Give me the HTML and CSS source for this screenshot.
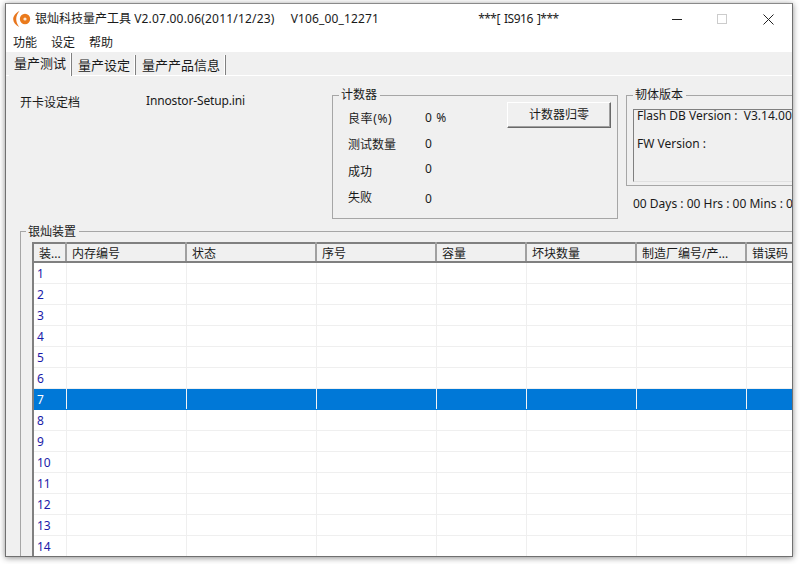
FILE: index.html
```html
<!DOCTYPE html>
<html lang="zh-CN">
<head>
<meta charset="utf-8">
<title>银灿科技量产工具</title>
<link rel="stylesheet" href="styles.css">
</head>
<body>
<div class="window">
  <header class="titlebar">
    <svg class="logo" viewBox="0 0 18 18" width="18" height="18"><path d="M6.4 1C2.6 3.2 0 6.2.2 9.5c.2 3.2 2.6 5.8 6 7.5C4.2 14 3.2 11.6 3.2 9.2 3.2 6.4 4.4 3.6 6.4 1z" fill="#e8761e"/><circle cx="12" cy="9" r="5.2" fill="#ea7a1c"/><circle cx="12" cy="9" r="1.6" fill="#fde6d2"/></svg>
    <span class="title-main">银灿科技量产工具 <span class="latin">V2.07.00.06(2011/12/23)</span></span>
    <span class="title-build latin">V106_00_12271</span>
    <span class="title-ic">***[ IS916 ]***</span>
    <div class="controls">
      <svg width="10" height="10" viewBox="0 0 10 10" class="ctl-min"><path d="M0 5.5h10" stroke="#222" stroke-width="1"/></svg>
      <svg width="10" height="10" viewBox="0 0 10 10" class="ctl-max"><rect x=".5" y=".5" width="9" height="9" fill="none" stroke="#ccc"/></svg>
      <svg width="11" height="11" viewBox="0 0 11 11" class="ctl-close"><path d="M.5.5l10 10M10.5.5l-10 10" stroke="#222" stroke-width="1"/></svg>
    </div>
  </header>
  <nav class="menubar"><span>功能</span><span>设定</span><span>帮助</span></nav>
  <div class="tabs">
    <span class="tab active">量产测试</span>
    <span class="tab">量产设定</span>
    <span class="tab">量产产品信息</span>
  </div>
  <main class="panel">
    <section class="top">
      <div class="setup">
        <span class="setup-label">开卡设定档</span>
        <span class="setup-value">Innostor-Setup.ini</span>
      </div>
      <fieldset class="group counter">
        <legend>计数器</legend>
        <div class="stats">
          <span class="s-l wide">良率(%)</span><span class="s-v wide">0 %</span>
          <span class="s-l">测试数量</span><span class="s-v">0</span>
          <span class="s-l">成功</span><span class="s-v up">0</span>
          <span class="s-l">失败</span><span class="s-v down">0</span>
        </div>
        <button class="reset">计数器归零</button>
      </fieldset>
      <div class="fw-col">
        <fieldset class="group firmware">
          <legend>韧体版本</legend>
          <div class="fw-box">
            <div class="fw-line">Flash DB Version :&nbsp; V3.14.00</div>
            <div class="fw-line second">FW Version :</div>
          </div>
        </fieldset>
        <div class="timer">00 Days : 00 Hrs : 00 Mins : 00 Secs</div>
      </div>
    </section>
    <fieldset class="group devices">
      <legend>银灿装置</legend>
      <table class="grid">
        <colgroup><col class="c0"><col class="c1"><col class="c2"><col class="c3"><col class="c4"><col class="c5"><col class="c6"><col class="c7"></colgroup>
        <thead><tr><th>装...</th><th>内存编号</th><th>状态</th><th>序号</th><th>容量</th><th>坏块数量</th><th>制造厂编号/产...</th><th>错误码</th></tr></thead>
        <tbody>
          <tr><td>1</td><td></td><td></td><td></td><td></td><td></td><td></td><td></td></tr>
          <tr><td>2</td><td></td><td></td><td></td><td></td><td></td><td></td><td></td></tr>
          <tr><td>3</td><td></td><td></td><td></td><td></td><td></td><td></td><td></td></tr>
          <tr><td>4</td><td></td><td></td><td></td><td></td><td></td><td></td><td></td></tr>
          <tr><td>5</td><td></td><td></td><td></td><td></td><td></td><td></td><td></td></tr>
          <tr><td>6</td><td></td><td></td><td></td><td></td><td></td><td></td><td></td></tr>
          <tr class="sel"><td>7</td><td></td><td></td><td></td><td></td><td></td><td></td><td></td></tr>
          <tr><td>8</td><td></td><td></td><td></td><td></td><td></td><td></td><td></td></tr>
          <tr><td>9</td><td></td><td></td><td></td><td></td><td></td><td></td><td></td></tr>
          <tr><td>10</td><td></td><td></td><td></td><td></td><td></td><td></td><td></td></tr>
          <tr><td>11</td><td></td><td></td><td></td><td></td><td></td><td></td><td></td></tr>
          <tr><td>12</td><td></td><td></td><td></td><td></td><td></td><td></td><td></td></tr>
          <tr><td>13</td><td></td><td></td><td></td><td></td><td></td><td></td><td></td></tr>
          <tr><td>14</td><td></td><td></td><td></td><td></td><td></td><td></td><td></td></tr>
        </tbody>
      </table>
    </fieldset>
  </main>
</div>
</body>
</html>
```
FILE: styles.css
```css
* { box-sizing: border-box; }
html, body { margin: 0; height: 100%; background: #fff; overflow: hidden; }
body { padding: 3px 7px 7px 5px; font: 12px/16px "Noto Sans", "Noto Sans CJK SC", sans-serif; color: #1a1a1a; }
.window { width: 788px; height: 554px; background: #f0f0f0; border: 1px solid #707070; border-top-color: #8a8a8a; box-shadow: 0 1px 6px rgba(0,0,0,.45); overflow: hidden; display: flex; flex-direction: column; }
.titlebar { height: 30px; flex: none; background: #fff; display: flex; align-items: center; padding-left: 7px; }
.logo { margin-right: 4px; flex: none; }
.latin { letter-spacing: .2px; }
.title-main { white-space: nowrap; }
.title-build { margin-left: 16px; letter-spacing: .15px; }
.title-ic { margin-left: 99px; letter-spacing: -.5px; word-spacing: 1.5px; }
.controls { margin-left: auto; display: flex; align-items: center; height: 100%; }
.ctl-min { margin-right: 35px; }
.ctl-max { margin-right: 36px; }
.ctl-close { margin-right: 18px; }
.menubar { height: 18px; flex: none; background: #fff; display: flex; gap: 14px; padding-left: 7px; align-items: center; line-height: 18px; }
.tabs { height: 24px; flex: none; display: flex; align-items: flex-end; padding-left: 3px; border-bottom: 1px solid #fff; }
.tab { height: 20px; padding: 0 5px 0 6px; border-right: 1px solid #808080; box-shadow: inset -1px 0 0 #fff; font-size: 13px; line-height: 21px; white-space: nowrap; }
.tab.active { height: 23px; margin-bottom: -1px; line-height: 20px; background: #f0f0f0; padding: 0 5px 0 5px; position: relative; }
.panel { flex: 1; min-height: 0; display: flex; flex-direction: column; }
.top { height: 147px; flex: none; display: flex; }
.setup { width: 326px; padding: 19px 0 0 14px; flex: none; display: flex; }
.setup-label { width: 126px; }
.setup-value { letter-spacing: -.15px; margin-top: -2px; }
.group { margin: 0; padding: 0; border: 1px solid #a6a6a6; min-width: 0; }
.group legend { padding: 0 3px 0 2px; margin-left: 6px; line-height: 14px; }
.counter { flex: none; width: 286px; height: 131px; margin-top: 12px; display: flex; }
.stats { display: grid; grid-template-columns: 77px auto; grid-auto-rows: 26.3px; padding: 9px 0 0 15px; width: 174px; }
.wide { letter-spacing: .6px; white-space: nowrap; }
.s-v { margin-top: -1px; }
.s-v.up { margin-top: -3px; }
.s-v.down { margin-top: 1px; }
.reset { width: 104px; height: 26px; margin-top: 0; font: inherit; color: inherit; background: #f0f0f0; border: 1px solid #fff; border-right-color: #696969; border-bottom-color: #696969; box-shadow: inset -1px -1px 0 #a0a0a0; padding: 0; }
.fw-col { margin-left: 8px; flex: none; width: 180px; padding-top: 12px; }
.firmware { height: 98px; width: 180px; padding: 7px 0 0 6px; }
.firmware legend { margin-left: 0; }
.fw-box { height: 73px; border-left: 1px solid #808080; border-top: 1px solid #808080; border-bottom: 1px solid #e0e0e0; white-space: nowrap; overflow: hidden; padding-left: 3px; }
.fw-line { line-height: 16px; margin-top: -2px; }
.fw-line.second { margin-top: 12px; }
.timer { margin-top: 10px; padding-left: 7px; white-space: nowrap; }
.devices { flex: 1; margin: 0 -4px 0 14px; min-height: 0; border-bottom: 0; padding: 3px 0 0 11px; overflow: hidden; }
.group.devices legend { margin-left: -6px; padding-top: 2px; }
.grid { border-collapse: collapse; table-layout: fixed; width: 770px; background: #fff; border-top: 2px solid #808080; border-left: 2px solid #808080; }
.c0 { width: 33px; } .c1 { width: 120px; } .c2 { width: 130px; } .c3 { width: 120px; } .c4 { width: 90px; } .c5 { width: 110px; } .c6 { width: 110px; } .c7 { width: 60px; }
th { height: 17px; padding: 2px 0 0 5px; font-weight: 400; text-align: left; background: #f0f0f0; border-right: 2px solid #a0a0a0; border-bottom: 2px solid #808080; line-height: 15px; white-space: nowrap; overflow: hidden; }
.grid thead { border-bottom: 2px solid #f0f0f0; }
td { height: 21px; padding: 2px 0 0 3px; border-right: 1px solid #efefef; border-bottom: 1px solid #efefef; color: #1b1ba8; line-height: 18px; }
.sel td { background: #0078d7; color: #fff; border-color: #f4f4f4; border-bottom-color: #0078d7; }
```
